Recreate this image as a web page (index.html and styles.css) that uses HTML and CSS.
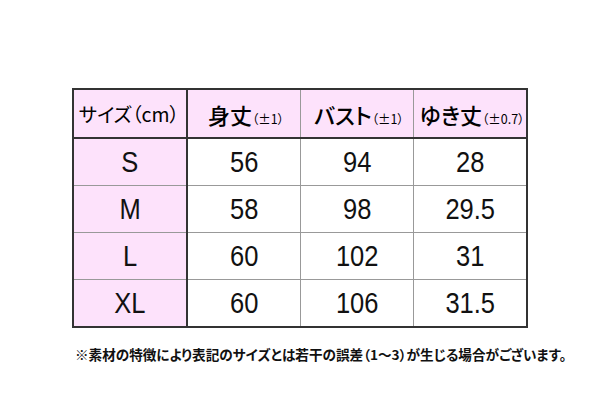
FILE: index.html
```html
<!DOCTYPE html>
<html lang="ja">
<head>
<meta charset="utf-8">
<link rel="stylesheet" href="styles.css">
</head>
<body>
<div class="page">
  <table class="size">
    <tr class="head">
      <th class="c1"><span class="h1">サイズ（cm）</span></th>
      <th><span class="hb">身丈</span><span class="hs">（±1）</span></th>
      <th><span class="hb">バスト</span><span class="hs">（±1）</span></th>
      <th><span class="hb">ゆき丈</span><span class="hs">（±0.7）</span></th>
    </tr>
    <tr><td class="c1"><span class="n">S</span></td><td><span class="n">56</span></td><td><span class="n">94</span></td><td><span class="n">28</span></td></tr>
    <tr><td class="c1"><span class="n">M</span></td><td><span class="n">58</span></td><td><span class="n">98</span></td><td><span class="n">29.5</span></td></tr>
    <tr><td class="c1"><span class="n">L</span></td><td><span class="n">60</span></td><td><span class="n">102</span></td><td><span class="n">31</span></td></tr>
    <tr><td class="c1"><span class="n">XL</span></td><td><span class="n">60</span></td><td><span class="n">106</span></td><td><span class="n">31.5</span></td></tr>
  </table>
  <p class="note">※素材の特徴により表記のサイズとは若干の誤差（1～3）が生じる場合がございます。</p>
</div>
</body>
</html>
```

FILE: styles.css
```css
html, body {
  margin: 0;
  padding: 0;
  background: #fff;
}
body {
  width: 600px;
  height: 413px;
  overflow: hidden;
  font-family: "Liberation Sans", "Noto Sans CJK JP", sans-serif;
  color: #111;
}
.page {
  padding: 88px 0 0 72px;
}
.size {
  border-collapse: collapse;
  border: 2px solid #333;
  table-layout: fixed;
}
.size th, .size td {
  border: 1px solid #999;
  text-align: center;
  padding: 0;
  width: 112px;
  height: 46px;
  font-weight: normal;
  white-space: nowrap;
}
.size .head th {
  background: #fde2fb;
  height: 47px;
  border-bottom: 2px solid #333;
  font-family: "Noto Sans CJK JP", sans-serif;
  font-feature-settings: "palt";
  color: #000;
}
.size .c1 {
  background: #fde2fb;
  border-right: 2px solid #333;
}
.n {
  display: inline-block;
  font-size: 29px;
  line-height: 1;
  transform: scaleX(0.88);
}
.h1 {
  font-size: 19.5px;
  margin-left: -2px;
}
.hb {
  font-size: 22px;
  font-weight: 500;
}
.hs {
  font-size: 12.5px;
  margin-right: -4px;
}
.note {
  margin: 16px 0 0 3px;
  font-family: "Noto Sans CJK JP", sans-serif;
  font-feature-settings: "palt";
  font-size: 13.6px;
  font-weight: bold;
  white-space: nowrap;
}
```
